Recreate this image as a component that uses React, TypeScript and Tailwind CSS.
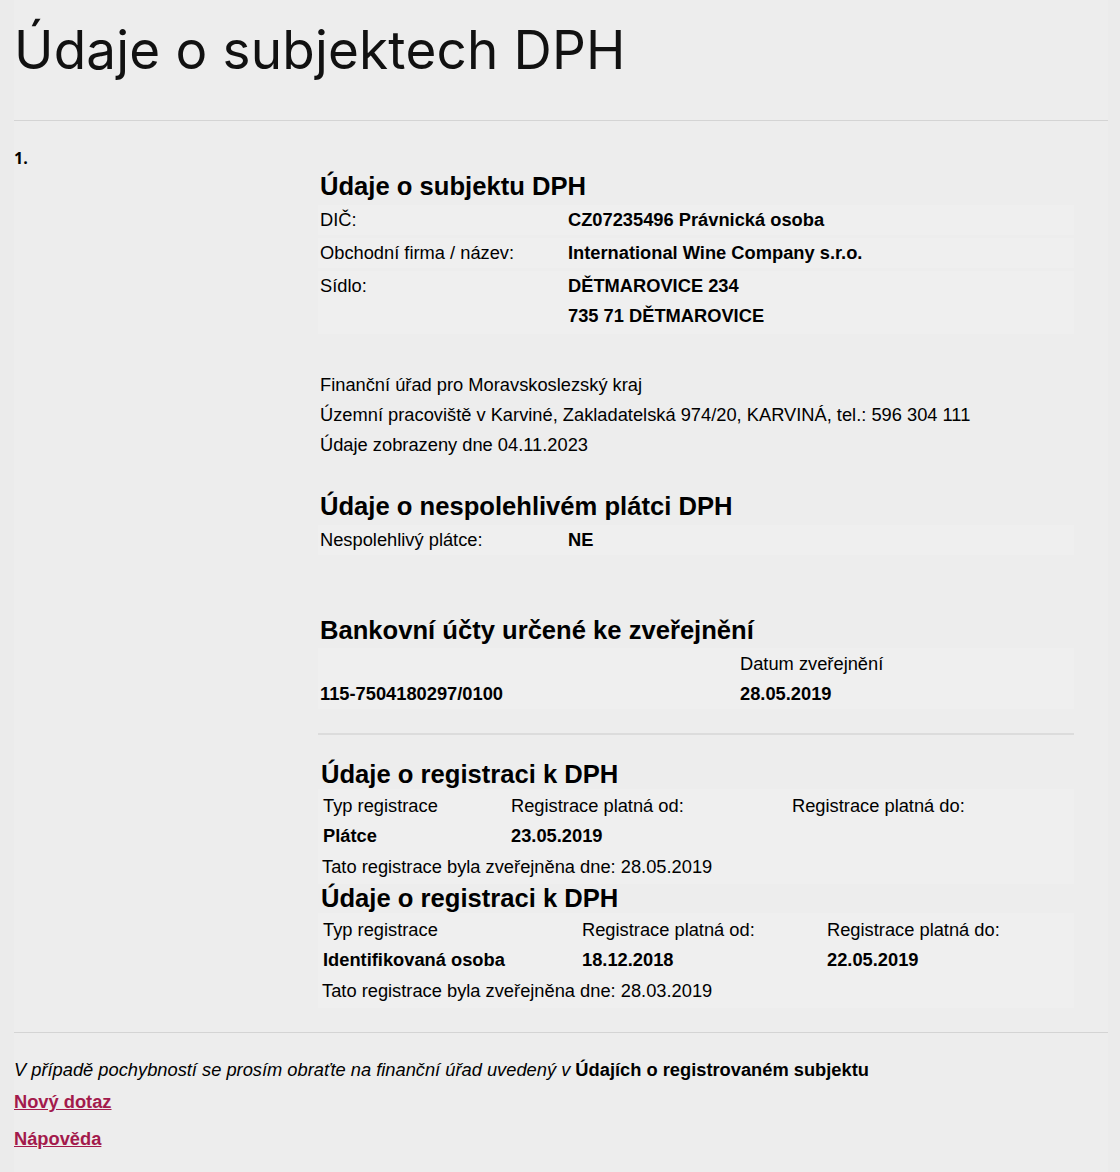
import React from 'react';

const Row = ({ label, children }: { label: string; children: React.ReactNode }) => (
  <div className="flex bg-[#efefef] px-[2px]">
    <div className="w-[248px] shrink-0">{label}</div>
    <div className="font-bold">{children}</div>
  </div>
);

interface Registration {
  typ: string;
  od: string;
  do: string;
  zverejneno: string;
  col1: string;
  col2: string;
}

const registrations: Registration[] = [
  { typ: 'Plátce', od: '23.05.2019', do: '', zverejneno: '28.05.2019', col1: 'w-[188px]', col2: 'w-[281px]' },
  { typ: 'Identifikovaná osoba', od: '18.12.2018', do: '22.05.2019', zverejneno: '28.03.2019', col1: 'w-[259px]', col2: 'w-[245px]' },
];

export default function App() {
  return (
    <div className="min-h-[1172px] bg-[#ebebeb] font-['Liberation_Sans',Arial,sans-serif] text-[18.3px] leading-[30px] text-black">
      <div className="ml-[14px] mr-[12px] pt-[18px] bg-[#ededed]">
        {/* Page title */}
        <h1 className="font-['Inter',sans-serif] font-normal text-[53px] leading-[64px] tracking-[0.2px] text-[#111]">
          Údaje o subjektech DPH
        </h1>
        <div className="mt-[38px] h-px bg-[#d4d4d4]"></div>

        <div className="flex pt-[25px]">
          <div className="w-[304px] shrink-0 font-['Open_Sans',sans-serif] font-bold text-[16px] leading-[24px]">1.</div>

          <div className="w-[756px] pt-[26px]">
            {/* Subject */}
            <h2 className="font-bold text-[25.6px] leading-[28px] px-[2px]">Údaje o subjektu DPH</h2>
            <div className="mt-[5px] flex flex-col gap-[3px]">
              <Row label="DIČ:">CZ07235496 Právnická osoba</Row>
              <Row label="Obchodní firma / název:">International Wine Company s.r.o.</Row>
              <Row label="Sídlo:">
                <div>DĚTMAROVICE 234</div>
                <div className="pb-[3px]">735 71 DĚTMAROVICE</div>
              </Row>
            </div>

            <div className="mt-[36px] px-[2px]">
              <div>Finanční úřad pro Moravskoslezský kraj</div>
              <div>Územní pracoviště v Karviné, Zakladatelská 974/20, KARVINÁ, tel.: 596 304 111</div>
              <div>Údaje zobrazeny dne 04.11.2023</div>
            </div>

            {/* Unreliable payer */}
            <h2 className="mt-[32px] font-bold text-[25.6px] leading-[28px] px-[2px]">Údaje o nespolehlivém plátci DPH</h2>
            <div className="mt-[5px]">
              <Row label="Nespolehlivý plátce:">NE</Row>
            </div>

            {/* Bank accounts */}
            <h2 className="mt-[61px] font-bold text-[25.6px] leading-[28px] px-[2px]">Bankovní účty určené ke zveřejnění</h2>
            <div className="mt-[4px] pt-[1px] bg-[#efefef] px-[2px]">
              <div className="flex">
                <div className="w-[420px]"></div>
                <div>Datum zveřejnění</div>
              </div>
              <div className="flex font-bold">
                <div className="w-[420px]">115-7504180297/0100</div>
                <div>28.05.2019</div>
              </div>
            </div>
            <div className="mt-[24px] h-[2px] bg-[#dcdcdc]"></div>

            {/* Registrations */}
            <div className="mt-[25px]">
              {registrations.map((r, i) => (
                <div key={i}>
                  <h2 className="font-bold text-[25.6px] leading-[28px] px-[3px]">Údaje o registraci k DPH</h2>
                  <div className="mt-[1px] bg-[#efefef] px-[5px] pt-[2px] pb-[2px]">
                    <div className="flex">
                      <div className={r.col1}>Typ registrace</div>
                      <div className={r.col2}>Registrace platná od:</div>
                      <div>Registrace platná do:</div>
                    </div>
                    <div className="flex font-bold">
                      <div className={r.col1}>{r.typ}</div>
                      <div className={r.col2}>{r.od}</div>
                      <div>{r.do}</div>
                    </div>
                    <div className="mt-[1px] -ml-[1px]">Tato registrace byla zveřejněna dne: {r.zverejneno}</div>
                  </div>
                </div>
              ))}
            </div>
          </div>
        </div>

        <div className="mt-[24px] h-px bg-[#d4d4d4]"></div>

        {/* Footer */}
        <div className="pt-[22px] pb-[20px]">
          <p className="leading-[30px]">
            <span className="italic">V případě pochybností se prosím obraťte na finanční úřad uvedený v </span>
            <span className="font-bold">Údajích o registrovaném subjektu</span>
          </p>
          <a href="#" className="mt-[2px] block w-fit font-bold text-[#a31a4c] underline">Nový dotaz</a>
          <a href="#" className="mt-[7px] block w-fit font-bold text-[#a31a4c] underline">Nápověda</a>
        </div>
      </div>
    </div>
  );
}
